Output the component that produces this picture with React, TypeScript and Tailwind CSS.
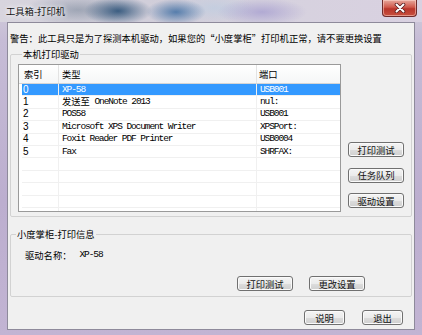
import React from "react";

type Row = { i: string; t: React.ReactNode; p: string; sel?: boolean };

const rows: Row[] = [
  { i: "0", t: "XP-58", p: "USB001", sel: true },
  {
    i: "1",
    t: (
      <>
        <span className="pb-[2px] font-['Noto_Sans_CJK_SC',sans-serif] text-[9.3px] tracking-normal">发送至</span>
        <span> OneNote 2013</span>
      </>
    ),
    p: "nul:",
  },
  { i: "2", t: "POS58", p: "USB001" },
  { i: "3", t: "Microsoft XPS Document Writer", p: "XPSPort:" },
  { i: "4", t: "Foxit Reader PDF Printer", p: "USB0004" },
  { i: "5", t: "Fax", p: "SHRFAX:" },
];

function Btn({ label, cls }: { label: string; cls: string }) {
  return (
    <div
      className={
        "flex items-center justify-center rounded-[3px] border border-[#707070] bg-[linear-gradient(#f4f4f4,#ebebeb_50%,#dddddd_51%,#cfcfcf)] shadow-[inset_0_0_0_1px_#fafafa] font-['Noto_Sans_CJK_SC',sans-serif] text-[9.3px] leading-[12px] text-[#111] " +
        cls
      }
    >
      {label}
    </div>
  );
}

export default function App() {
  const emptyRows = Array.from({ length: 6 });
  return (
    <div className="relative h-[335px] w-[422px] overflow-hidden bg-[linear-gradient(#d3cfdb,#c6bcd6_40px,#bcaecf_200px,#c2b4d3)]">
      {/* title bar */}
      <div className="flex h-[22px] items-center pl-[6px] [background-image:radial-gradient(34px_14px_at_118px_11px,rgba(35,75,115,0.85),transparent),radial-gradient(30px_13px_at_176px_12px,rgba(55,105,160,0.8),transparent),radial-gradient(55px_16px_at_78px_10px,rgba(115,130,150,0.55),transparent),radial-gradient(45px_14px_at_262px_12px,rgba(140,130,200,0.5),transparent),radial-gradient(40px_14px_at_215px_8px,rgba(190,205,225,0.7),transparent),linear-gradient(90deg,#d8d5de,#d0cdd9_40%,#d6d2de_60%,#d9d1e1)]">
        <span className="font-['Noto_Sans_CJK_SC',sans-serif] text-[9.3px] leading-[12px] text-[#151515] [text-shadow:0_0_4px_#fff,0_0_6px_#fff]">
          工具箱-打印机
        </span>
      </div>

      {/* close button */}
      <div className="absolute left-[382px] top-0 flex h-[17px] w-[35px] items-center justify-center rounded-b-[4px] border border-t-0 border-[#6e2b2b] bg-[linear-gradient(#e7a89c,#d0594b_45%,#b8352a_55%,#c8503f)] shadow-[inset_0_0_0_1px_rgba(255,220,210,0.5)]">
        <svg width="12" height="10" viewBox="0 0 12 10">
          <path d="M2.5 1.5 L9.5 8.5 M9.5 1.5 L2.5 8.5" stroke="#5a2020" strokeWidth="3.6" strokeLinecap="round" />
          <path d="M2.5 1.5 L9.5 8.5 M9.5 1.5 L2.5 8.5" stroke="#ffffff" strokeWidth="2" strokeLinecap="round" />
        </svg>
      </div>

      {/* client area */}
      <div className="ml-[7px] flex h-[308px] w-[408px] flex-col border border-[#8e8a9b] bg-[#f0f0f0] text-black">
        <div className="pl-[2px] pt-[9px] font-['Noto_Sans_CJK_SC',sans-serif] text-[9.3px] leading-[12px] whitespace-nowrap">
          警告：此工具只是为了探测本机驱动，如果您的“小度掌柜”打印机正常，请不要更换设置
        </div>

        {/* group 1 */}
        <fieldset className="ml-[2px] mt-[4px] w-[402px] rounded-[2px] border border-[#d2d2d2] px-[7px] pb-[4px] pt-[4px]">
          <legend className="ml-[4px] px-[1px] font-['Noto_Sans_CJK_SC',sans-serif] text-[9.3px] leading-[12px]">
            本机打印驱动
          </legend>
          <div className="flex gap-[7px]">
            {/* list view */}
            <div className="h-[148px] w-[323px] overflow-hidden border border-[#9a9a9a] bg-white">
              <div className="flex h-[19px] border-b border-[#d5d5d5] bg-[linear-gradient(#ffffff,#f5f6f7)] pl-[3px] font-['Noto_Sans_CJK_SC',sans-serif] text-[9.3px] leading-[12px]">
                <div className="flex w-[37px] items-center border-r border-[#e3e3e3] pl-[2px]">索引</div>
                <div className="flex w-[198px] items-center border-r border-[#e3e3e3] pl-[3px]">类型</div>
                <div className="flex flex-1 items-center pl-[2px]">端口</div>
              </div>
              <div className="pl-[3px]">
                {rows.map((r) => (
                  <div
                    key={r.i}
                    className={
                      "flex h-[12.4px] border-b border-[#f0f0f0] " +
                      (r.sel ? "bg-[#3399ff] text-white" : "text-black")
                    }
                  >
                    <div className="flex w-[37px] items-center border-r border-[#f0f0f0] pl-[1px] font-['Liberation_Sans',sans-serif] text-[10px] leading-[12px]">
                      {r.i}
                    </div>
                    <div className="flex w-[198px] items-center whitespace-pre border-r border-[#f0f0f0] pl-[3px] font-['Liberation_Mono','Noto_Sans_CJK_SC',monospace] text-[9.5px] leading-[12px] tracking-[-1.1px]">
                      {r.t}
                    </div>
                    <div className="flex flex-1 items-center pl-[3px] font-['Liberation_Mono',monospace] text-[9.5px] leading-[12px] tracking-[-1.1px]">
                      {r.p}
                    </div>
                  </div>
                ))}
                {emptyRows.map((_, k) => (
                  <div key={k} className="flex h-[12.4px] border-b border-[#f0f0f0]">
                    <div className="w-[37px] border-r border-[#f0f0f0]" />
                    <div className="w-[198px] border-r border-[#f0f0f0]" />
                    <div className="flex-1" />
                  </div>
                ))}
              </div>
            </div>

            {/* side buttons */}
            <div className="flex flex-col gap-[10.5px] pt-[78px]">
              <Btn label="打印测试" cls="h-[15px] w-[56px]" />
              <Btn label="任务队列" cls="h-[15px] w-[56px]" />
              <Btn label="驱动设置" cls="h-[15px] w-[56px]" />
            </div>
          </div>
        </fieldset>

        {/* group 2 */}
        <fieldset className="ml-[2px] mt-[11px] w-[402px] rounded-[2px] border border-[#d2d2d2] pb-[5px]">
          <legend className="ml-[5px] px-[1px] font-['Noto_Sans_CJK_SC',sans-serif] text-[9.3px] leading-[12px]">
            小度掌柜-打印信息
          </legend>
          <div className="flex items-center pl-[14px] pt-[9px] leading-[12px]">
            <span className="font-['Noto_Sans_CJK_SC',sans-serif] text-[9.3px]">驱动名称：</span>
            <span className="ml-[8px] font-['Liberation_Mono',monospace] text-[9.5px] tracking-[-1.1px]">XP-58</span>
          </div>
          <div className="mt-[15px] flex justify-end gap-[16px] pr-[46px]">
            <Btn label="打印测试" cls="h-[15px] w-[56px]" />
            <Btn label="更改设置" cls="h-[15px] w-[56px]" />
          </div>
        </fieldset>

        {/* footer buttons */}
        <div className="mt-[13px] flex justify-end gap-[17px] pr-[11px]">
          <Btn label="说明" cls="h-[15px] w-[41px]" />
          <Btn label="退出" cls="h-[15px] w-[41px]" />
        </div>
      </div>
    </div>
  );
}
